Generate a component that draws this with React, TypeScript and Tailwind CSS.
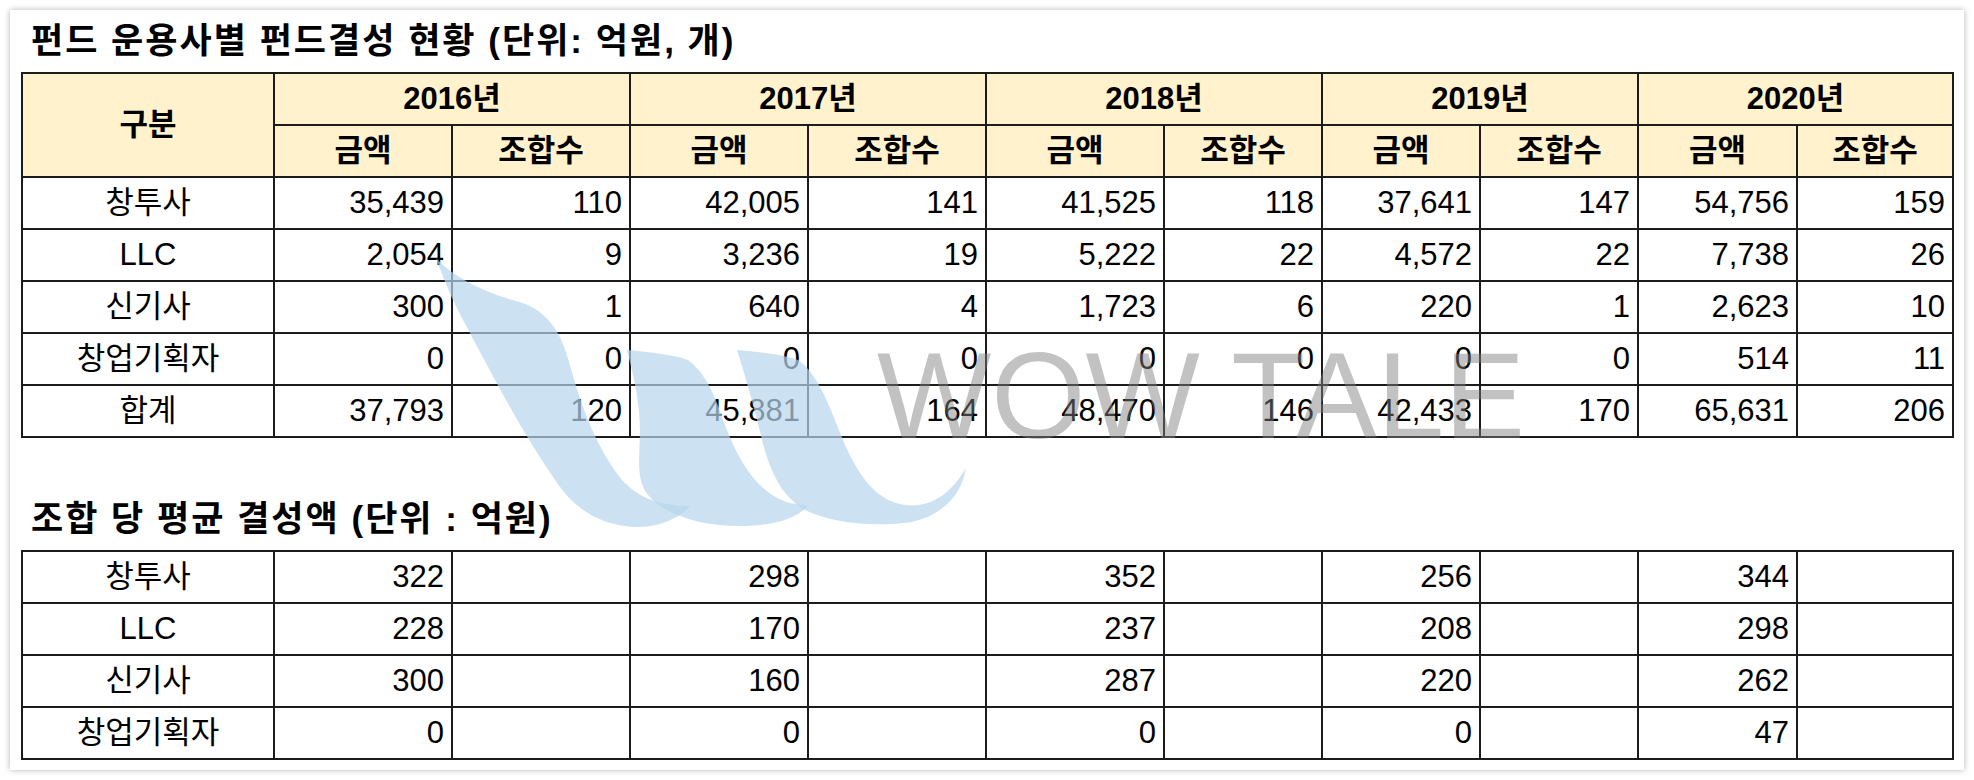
import React from 'react';

const font = { fontFamily: '"Liberation Sans", "Noto Sans CJK KR", Arial, sans-serif' };

const years = ['2016년', '2017년', '2018년', '2019년', '2020년'];
const colWidths = [252, 178, 178, 178, 178, 178, 158, 158, 158, 159, 156];

const fundRows: [string, string[]][] = [
  ['창투사', ['35,439', '110', '42,005', '141', '41,525', '118', '37,641', '147', '54,756', '159']],
  ['LLC', ['2,054', '9', '3,236', '19', '5,222', '22', '4,572', '22', '7,738', '26']],
  ['신기사', ['300', '1', '640', '4', '1,723', '6', '220', '1', '2,623', '10']],
  ['창업기획자', ['0', '0', '0', '0', '0', '0', '0', '0', '514', '11']],
  ['합계', ['37,793', '120', '45,881', '164', '48,470', '146', '42,433', '170', '65,631', '206']],
];

const avgRows: [string, string[]][] = [
  ['창투사', ['322', '298', '352', '256', '344']],
  ['LLC', ['228', '170', '237', '208', '298']],
  ['신기사', ['300', '160', '287', '220', '262']],
  ['창업기획자', ['0', '0', '0', '0', '47']],
];

const cell = 'border-2 border-[#1c1c1c] h-[52px] p-0';

const ColGroup = () => (
  <colgroup>
    {colWidths.map((w, i) => (
      <col key={i} style={{ width: w }} />
    ))}
  </colgroup>
);

// WOW TALE watermark laid over the tables
const Watermark = () => (
  <svg
    className="pointer-events-none absolute left-0 top-0"
    width={1974}
    height={780}
    viewBox="0 0 1974 780"
  >
    <g fill="#b7d6ec" fillOpacity={0.7}>
      <path d="M436,258 C455,280 495,296 520,302 C550,312 562,335 570,365 C582,410 598,450 622,480 C640,500 665,506 690,506 C678,520 655,528 635,527 C600,525 575,510 555,480 C520,430 490,370 463,320 C450,295 442,275 436,258 Z" />
      <path d="M627,350 C650,352 675,355 688,360 C705,372 715,395 725,425 C740,465 760,495 790,503 L808,506 C795,520 770,526 740,526 C700,526 665,515 648,495 C635,478 640,455 640,430 C640,400 632,370 627,350 Z" />
      <path d="M737,350 C760,352 785,355 798,360 C815,372 825,395 835,420 C852,465 870,500 905,505 C930,508 950,495 966,468 C962,495 942,515 912,522 C870,528 830,522 805,510 C780,495 770,470 762,440 C755,410 745,375 737,350 Z" />
    </g>
    <text
      x={877}
      y={438}
      fontSize={122}
      textLength={648}
      lengthAdjust="spacingAndGlyphs"
      fill="#808080"
      fillOpacity={0.48}
      style={{ fontFamily: '"Liberation Sans", Arial, sans-serif' }}
    >
      WOW TALE
    </text>
  </svg>
);

export default function App() {
  return (
    <div className="relative h-[780px] w-full bg-white text-black" style={font}>
      <div className="ml-[10px] pt-[10px]">
        <div className="h-[760px] w-[1954px] bg-white pl-[11px] shadow-[0_0_6px_rgba(0,0,0,0.3)]">
          <div className="flex h-[62px] items-center pl-[10px] text-[35px] font-bold tracking-[2px]">
            펀드 운용사별 펀드결성 현황 (단위: 억원, 개)
          </div>
          <table className="table-fixed border-collapse text-[31px]" style={{ width: 1931 }}>
            <ColGroup />
            <thead>
              <tr className="bg-[#fff2cc]">
                <th rowSpan={2} className={`${cell} text-center font-bold`}>
                  구분
                </th>
                {years.map((y) => (
                  <th key={y} colSpan={2} className={`${cell} text-center font-bold`}>
                    {y}
                  </th>
                ))}
              </tr>
              <tr className="bg-[#fff2cc]">
                {years.map((y) => (
                  <React.Fragment key={y}>
                    <th className={`${cell} text-center font-bold`}>금액</th>
                    <th className={`${cell} text-center font-bold`}>조합수</th>
                  </React.Fragment>
                ))}
              </tr>
            </thead>
            <tbody>
              {fundRows.map(([label, vals]) => (
                <tr key={label}>
                  <td className={`${cell} text-center`}>{label}</td>
                  {vals.map((v, i) => (
                    <td key={i} className={`${cell} pr-[7px] text-right`}>
                      {v}
                    </td>
                  ))}
                </tr>
              ))}
            </tbody>
          </table>
          <div className="mt-[50px] flex h-[62px] items-center pl-[10px] text-[35px] font-bold tracking-[2px]">
            조합 당 평균 결성액 (단위 : 억원)
          </div>
          <table className="table-fixed border-collapse text-[31px]" style={{ width: 1931 }}>
            <ColGroup />
            <tbody>
              {avgRows.map(([label, vals]) => (
                <tr key={label}>
                  <td className={`${cell} text-center`}>{label}</td>
                  {vals.map((v, i) => (
                    <React.Fragment key={i}>
                      <td className={`${cell} pr-[7px] text-right`}>{v}</td>
                      <td className={cell}></td>
                    </React.Fragment>
                  ))}
                </tr>
              ))}
            </tbody>
          </table>
        </div>
      </div>
      <Watermark />
    </div>
  );
}
